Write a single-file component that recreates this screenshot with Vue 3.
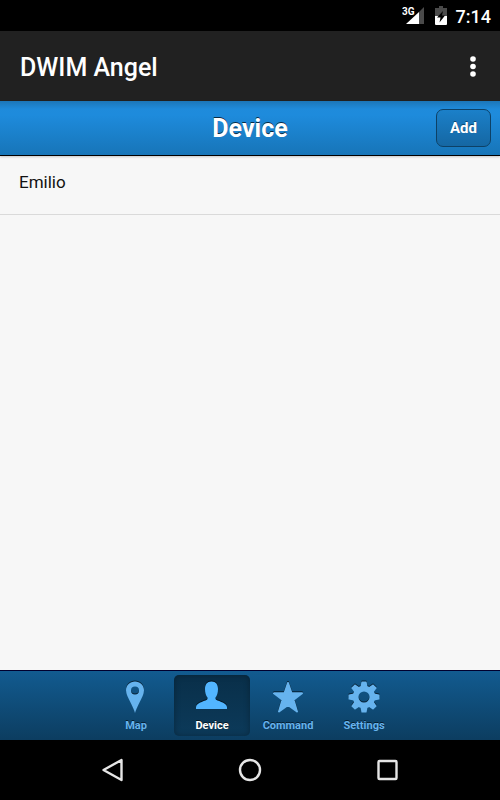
<script setup>
import { ref } from 'vue'

const devices = ref(['Emilio'])
const activeTab = ref('Device')
const tabs = ['Map', 'Device', 'Command', 'Settings']
const teeth = [0, 45, 90, 135, 180, 225, 270, 315]
</script>

<template>
  <div class="screen">
    <div class="status-bar">
      <svg class="signal" width="24" height="20" viewBox="0 0 24 20">
        <path d="M17 7L22 2V19H17Z" fill="#4a4a4a" />
        <path d="M17 7V19H4Z" fill="#fff" />
        <text x="0" y="10" class="network">3G</text>
      </svg>
      <svg class="battery" width="12" height="19" viewBox="0 0 12 19">
        <path d="M4 0H8V2H12V10H0V2H4Z" fill="#4a4a4a" />
        <path d="M0 10H12V18Q12 19 11 19H1Q0 19 0 18Z" fill="#fff" />
        <path d="M8 5L2 11.5H5.5L4.5 16.5L10 9.5H7Z" fill="#000" />
      </svg>
      <span class="clock">7:14</span>
    </div>

    <header class="app-bar">
      <h1>DWIM Angel</h1>
      <button class="overflow" type="button" aria-label="More options">
        <svg width="6" height="22" viewBox="0 0 6 22">
          <circle cx="3" cy="4" r="2.8" />
          <circle cx="3" cy="11.5" r="2.8" />
          <circle cx="3" cy="19" r="2.8" />
        </svg>
      </button>
    </header>

    <div class="toolbar">
      <h2>Device</h2>
      <button class="add" type="button">Add</button>
    </div>

    <main>
      <ul class="list">
        <li v-for="name in devices" :key="name">{{ name }}</li>
      </ul>
    </main>

    <nav class="tab-bar">
      <button
        v-for="tab in tabs"
        :key="tab"
        type="button"
        class="tab"
        :class="{ active: tab === activeTab }"
        @click="activeTab = tab"
      >
        <svg width="32" height="32" viewBox="0 0 32 32">
          <path
            v-if="tab === 'Map'"
            fill-rule="evenodd"
            d="M15 .5C10 .5 6 4.4 6 9.3C6 13 8 16.5 10 20.5C12 24.5 14 28.5 15 32C16 28.5 18 24.5 20 20.5C22 16.5 24 13 24 9.3C24 4.4 20 .5 15 .5ZM15 5.5A4 4 0 1 1 15 13.5A4 4 0 1 1 15 5.5Z"
          />
          <path
            v-else-if="tab === 'Device'"
            d="M15.500 .5C11 .5 9 3.500 9 8C9 12 10 14.500 11.500 16.500V18C11 20 .5 21 0 26V28H31V26C30.500 21 20 20 19.500 18V16.500C21 14.500 22 12 22 8C22 3.500 20 .5 15.500 .5Z"
          />
          <path
            v-else-if="tab === 'Command'"
            class="star"
            d="M16 2L19.5 12.3H30L21.5 18.8L25 30.5L16 24L7 30.5L10.5 18.8L2 12.3H12.5Z"
          />
          <g v-else>
            <path
              fill-rule="evenodd"
              d="M16 4.8A11.2 11.2 0 1 1 16 27.2A11.2 11.2 0 1 1 16 4.8ZM16 10.500A5.500 5.500 0 1 0 16 21.500A5.500 5.500 0 1 0 16 10.500Z"
            />
            <path
              v-for="a in teeth"
              :key="a"
              d="M14 .5H18Q18.5 .5 18.6 1L19.8 7H12.2L13.4 1Q13.5 .5 14 .5Z"
              :transform="`rotate(${a} 16 16)`"
            />
          </g>
        </svg>
        <span>{{ tab }}</span>
      </button>
    </nav>

    <div class="system-nav">
      <button type="button" aria-label="Back">
        <svg width="24" height="24" viewBox="0 0 24 24">
          <path d="M20.5 2V22L2.5 12Z" />
        </svg>
      </button>
      <button type="button" aria-label="Home">
        <svg width="24" height="24" viewBox="0 0 24 24">
          <circle cx="12" cy="12" r="10" />
        </svg>
      </button>
      <button type="button" aria-label="Recent apps">
        <svg width="24" height="24" viewBox="0 0 24 24">
          <rect x="2.5" y="3" width="18" height="18" rx="1" />
        </svg>
      </button>
    </div>
  </div>
</template>

<style>
body {
  background: #000;
}
</style>

<style scoped>
.screen {
  display: flex;
  flex-direction: column;
  min-height: 100vh;
  font-family: Roboto, sans-serif;
  background: #f7f7f7;
}
h1,
h2,
ul {
  margin: 0;
  padding: 0;
}
button {
  font-family: inherit;
  border: 0;
  padding: 0;
  background: none;
  cursor: pointer;
}
svg {
  display: block;
}

.status-bar {
  display: flex;
  justify-content: flex-end;
  align-items: center;
  height: 31px;
  padding-right: 9px;
  background: #000;
  color: #fff;
}
.network {
  font-size: 10px;
  font-weight: 700;
  fill: #fff;
}
.signal {
  margin-bottom: 1px;
}
.battery {
  margin-left: 9px;
}
.clock {
  margin-left: 9px;
  padding-top: 2px;
  font-size: 18px;
  font-weight: 500;
}

.app-bar {
  display: flex;
  justify-content: space-between;
  align-items: center;
  height: 70px;
  padding: 0 24px 0 20px;
  background: #212121;
}
.app-bar h1 {
  padding-top: 4px;
  color: #fff;
  font-size: 25px;
  font-weight: 500;
  line-height: 32px;
}
.overflow svg {
  fill: #fff;
}

.toolbar {
  display: grid;
  grid-template-columns: 1fr auto 1fr;
  align-items: center;
  box-sizing: border-box;
  height: 55px;
  padding: 0 9px;
  border-bottom: 1px solid #000;
  background: linear-gradient(#1c76b8, #1f8bdb 8px, #1e8bdc 14px, #1775b8);
  box-shadow: 0 1px 2px rgba(0, 0, 0, 0.2);
}
.toolbar h2 {
  grid-column: 2;
  padding-top: 2px;
  color: #fff;
  font-size: 25px;
  font-weight: 700;
  line-height: 32px;
  text-shadow: 0 -1px 0 rgba(0, 0, 0, 0.7);
}
.add {
  justify-self: end;
  box-sizing: border-box;
  width: 55px;
  height: 38px;
  border: 1px solid #0d4166;
  border-radius: 7px;
  background: linear-gradient(#1b80c9, #1567a3);
  color: #fff;
  font-size: 15px;
  font-weight: 700;
  text-shadow: 0 -1px 0 rgba(0, 0, 0, 0.4);
}

main {
  flex: 1;
}
.list {
  list-style: none;
}
.list li {
  box-sizing: border-box;
  height: 59px;
  padding: 14px 19px;
  border-bottom: 1px solid #dadada;
  color: #111;
  font-size: 17px;
  line-height: 24px;
}

.tab-bar {
  display: flex;
  justify-content: center;
  box-sizing: border-box;
  height: 70px;
  padding: 4px 0;
  border-top: 1px solid #00002e;
  background: linear-gradient(#125b90, #0c3d60);
}
.tab {
  display: flex;
  flex-direction: column;
  align-items: center;
  width: 76px;
  padding-top: 6px;
  border-radius: 5px;
  color: #66b3ee;
  font-size: 11px;
  font-weight: 700;
  line-height: 14px;
  text-shadow: 0 -1px 0 rgba(0, 0, 0, 0.6);
}
.tab svg {
  margin-bottom: 6px;
  fill: #66b3ee;
  filter: drop-shadow(0 -1px 0 rgba(0, 0, 0, 0.6));
}
.star {
  stroke: #66b3ee;
  stroke-width: 2;
  stroke-linejoin: round;
}
.tab.active {
  background: linear-gradient(#092f49, #0c3a5a);
  box-shadow: inset 0 0 6px rgba(0, 0, 0, 0.3);
  color: #fff;
}
.tab.active svg {
  fill: #52b5ff;
}

.system-nav {
  display: flex;
  justify-content: center;
  align-items: center;
  height: 60px;
  background: #000;
}
.system-nav button {
  display: flex;
  justify-content: center;
  width: 27.5%;
}
.system-nav svg {
  fill: none;
  stroke: #e6e6e6;
  stroke-width: 2.4;
  stroke-linejoin: round;
}
</style>
